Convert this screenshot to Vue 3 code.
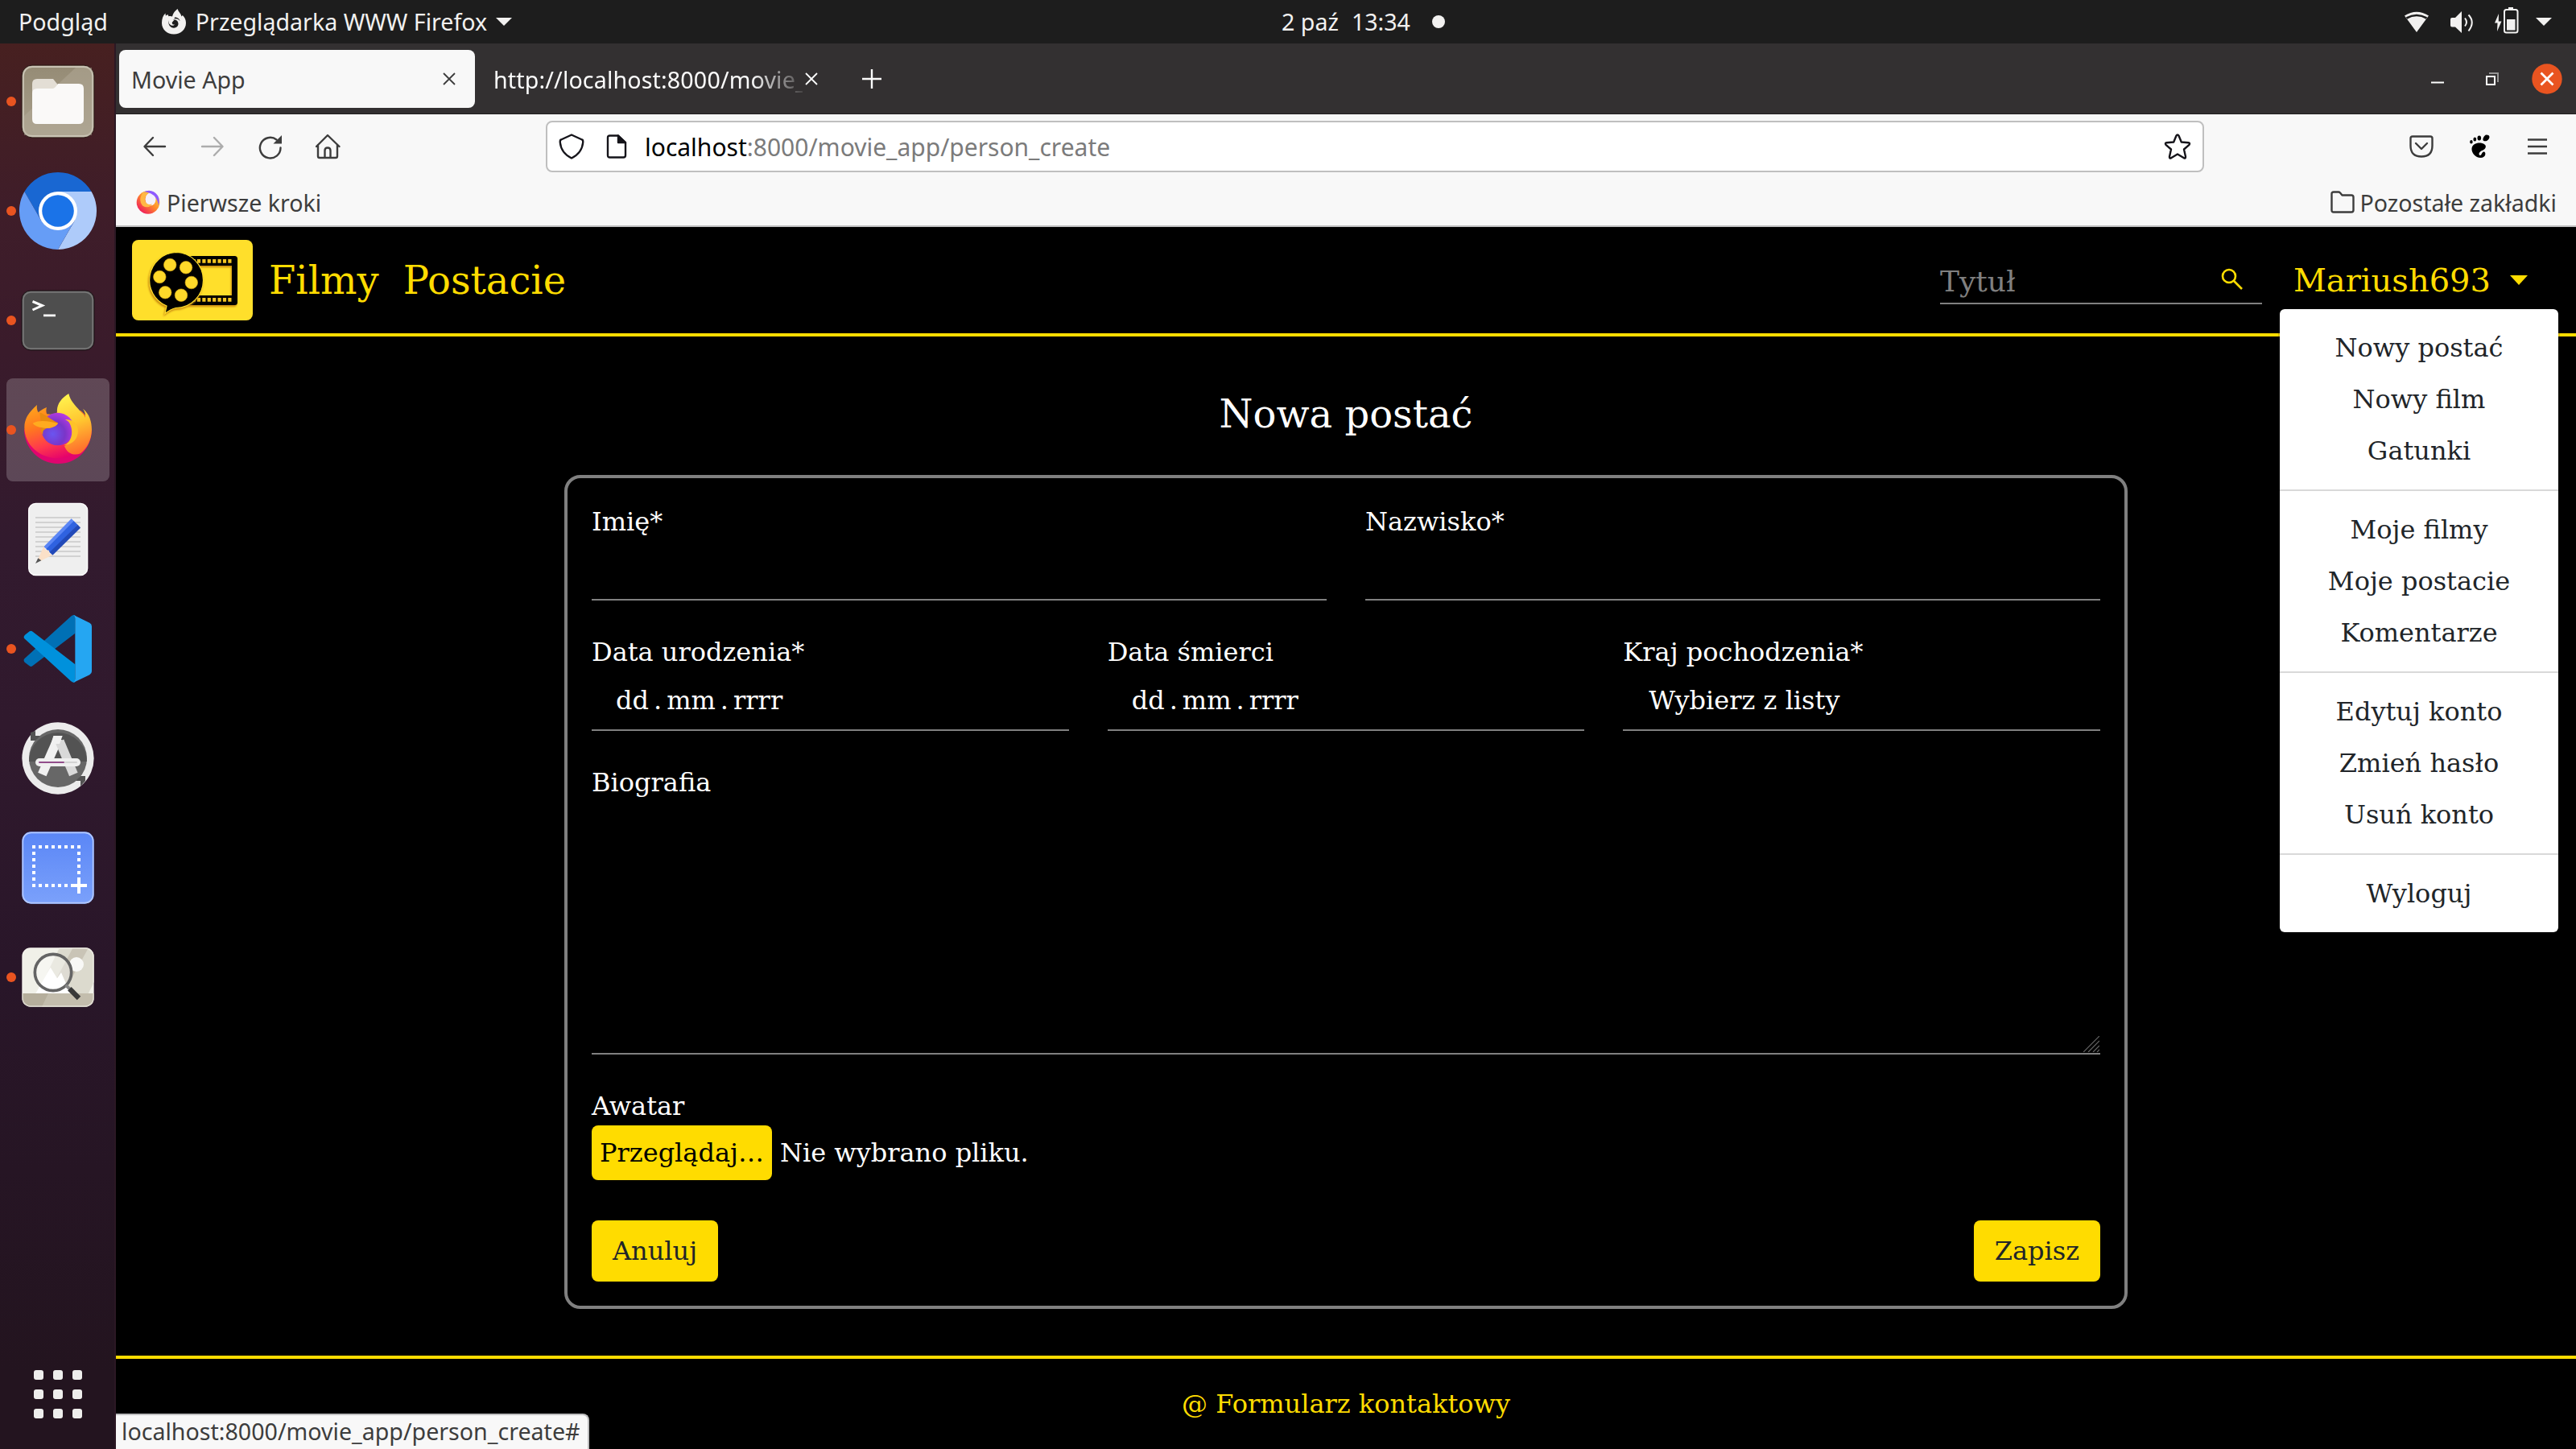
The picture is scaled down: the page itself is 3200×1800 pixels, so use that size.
<script setup>
const menuGroups = [
  ['Nowy postać', 'Nowy film', 'Gatunki'],
  ['Moje filmy', 'Moje postacie', 'Komentarze'],
  ['Edytuj konto', 'Zmień hasło', 'Usuń konto'],
  ['Wyloguj'],
]
const paperLines = [729, 747, 765, 783, 801, 819, 837, 855, 873]
const reelHoles = [[47.2, 31], [67, 34.3], [34.3, 46], [73.8, 53], [41.2, 65.3], [61, 68.7]]
</script>

<template>
  <div class="desktop">
    <div class="topbar">
      <div class="top-left">
        <span>Podgląd</span>
        <svg class="fx" viewBox="0 0 30 32" width="30" height="32"><path fill="#f2f1f0" d="M15 31.5C6.500 31.500 0 25.500 0 17.500C0 12 1.500 8.500 4.500 5.500L4.800 8.500L7.500 7L8.500 9.200C10.500 8.700 12 9 13 9.500C14 5 16.500 2.500 19.500 0C20.500 3.500 24 6 24.500 9.500L25.800 8C28.500 10.500 30 13.500 30 17.500C30 25.500 23.500 31.500 15 31.500Z" /><path fill="#1d1d1d" d="M8.500 14.500C11 15.500 13 14.500 14.500 13.500C17.500 13 20.500 15 20.500 18.500C20.500 21.500 18 23.700 15 23.700C10.500 23.700 7.500 19.500 8.500 14.500ZM16 10.500C19.500 10.500 22 12.500 22.500 15C20.500 12.500 18 12 15.500 12.500Z" /><path fill="#f2f1f0" d="M8 13.500L15.500 13.800L12.800 16.700C12.500 18.500 13.500 20 16 19.500C14 22 9 20.500 8.500 16.500Z" /></svg>
        <span>Przeglądarka WWW Firefox</span>
        <i class="tri tri-top"></i>
      </div>
      <div class="clock">
        <span>2 paź</span><span class="time">13:34</span><i class="rec"></i>
      </div>
      <div class="tray">
        <svg viewBox="0 0 30 26" width="30" height="26"><path fill="#f2f1f0" d="M0 5.500Q15-4 30 5.500L15 26Z" /><path fill="none" stroke="#1d1d1d" stroke-width="2.600" d="M2.500 8.500Q15 1.500 27.500 8.500" /></svg>
        <svg class="vol" viewBox="0 0 29 27" width="29" height="27"><path fill="#f2f1f0" d="M0 10Q0 8 2 8H6L14 0V27L6 19.500H2Q0 19.500 0 17.500Z" /><path fill="none" stroke="#f2f1f0" stroke-width="2" d="M18 8.500Q22 13.500 18 18.500M22.500 4.500Q31 13.500 22.500 24.500" /></svg>
        <svg class="bat" viewBox="0 0 30 33" width="30" height="33"><path fill="#f2f1f0" d="M5 8L0 19.500H3.500L3 30L8.500 17.500H4.800Z" /><rect x="12" y="3" width="16.500" height="28.500" rx="2.500" fill="none" stroke="#f2f1f0" stroke-width="2" /><path fill="#f2f1f0" d="M17 0H23V3H17ZM15 15H25.500V28.500H15Z" /></svg>
        <i class="tri"></i>
      </div>
    </div>

    <div class="workspace">
      <aside class="dock">
        <div class="slot run">
          <svg viewBox="0 0 128 128"><defs><linearGradient id="fg" x1="0" y1="0" x2="0" y2="1"><stop offset="0" stop-color="#958b75" /><stop offset="1" stop-color="#a9a08c" /></linearGradient></defs><rect x="19" y="19" width="90" height="90" rx="13" fill="url(#fg)" stroke="#2a1616" /><rect x="21" y="21" width="86" height="86" rx="11" fill="none" stroke="#c9c3b4" stroke-width="1.800" /><path fill="#b5ad9b" opacity=".45" d="M86 22H106V106H22V82Z" /><path fill="#e3ded5" d="M32 42Q32 36 38 36H58L66 46V56H32Z" /><path fill="#faf9f8" d="M32 54Q32 48 38 48H58Q61 47 64 42H90Q96 42 96 48V86Q96 92 90 92H38Q32 92 32 86Z" /></svg>
        </div>
        <div class="slot run">
          <svg viewBox="0 0 128 128"><path fill="#1967d2" d="M22.400 40A48 48 0 0 1 105.600 40H64L43.200 76Z" /><path fill="#aecbfa" d="M105.600 40A48 48 0 0 1 64 112L84.800 76L64 40Z" /><path fill="#669df6" d="M64 112A48 48 0 0 1 22.400 40L43.200 76H84.800Z" /><circle cx="64" cy="64" r="24" fill="#fff" /><circle cx="64" cy="64" r="19.800" fill="#1a73e8" /></svg>
        </div>
        <div class="slot run">
          <svg viewBox="0 0 128 128"><rect x="19" y="27" width="90" height="74" rx="11" fill="#4e4e4e" stroke="#1b1014" /><rect x="20.800" y="28.800" width="86.400" height="70.400" rx="9.500" fill="none" stroke="#777" stroke-width="1.800" /><path fill="none" stroke="#fff" stroke-width="3" d="M32.500 40.500L44.500 45.500L32.500 51" /><path fill="#fff" d="M46 56.500H61V59.200H46Z" /></svg>
        </div>
        <div class="slot run active">
          <svg viewBox="24 210 384 384">
            <defs>
              <linearGradient id="f1" x1=".2" y1="0" x2=".6" y2="1"><stop offset="0" stop-color="#ffa41c" /><stop offset=".35" stop-color="#ff7a1e" /><stop offset=".7" stop-color="#ff3a4c" /><stop offset="1" stop-color="#e5006c" /></linearGradient>
              <linearGradient id="f2" x1=".3" y1="0" x2=".5" y2="1"><stop offset="0" stop-color="#fff44f" /><stop offset=".5" stop-color="#ffc52f" /><stop offset="1" stop-color="#ff6b2d" /></linearGradient>
              <radialGradient id="f3" cx=".35" cy=".65" r=".75"><stop offset="0" stop-color="#6a55f0" /><stop offset=".5" stop-color="#7a35c8" /><stop offset="1" stop-color="#c43be8" /></radialGradient>
            </defs>
            <path fill="#e0056f" d="M90 400C90 470 145 528 216 528C290 528 342 470 342 398Z" />
            <path fill="url(#f1)" d="M91 392C92 355 110 335 138 309C136 322 139 331 143 337C152 328 163 323 174 318C171 328 172 338 175 343C190 345 202 346 214 336L300 330C328 350 336 380 334 412C325 468 275 508 216 508C145 508 90 455 91 392Z" />
            <path fill="url(#f2)" d="M213 338C210 308 228 284 256 267C262 296 285 315 303 337C315 347 316 352 317 357C320 345 316 333 309 323C332 341 342 370 342 402C341 440 325 470 300 490C275 500 250 490 240 462C262 455 274 432 268 400Z" />
            <circle cx="215" cy="399" r="61" fill="url(#f3)" />
            <path fill="#e88b10" d="M148 337C170 345 190 365 216 376C216 384 198 395 174 396C160 402 158 410 161 421C148 405 152 398 154 392Z" />
            <path fill="#ffab1f" d="M122 377C150 362 190 372 216 378C208 390 190 396 174 396C160 392 135 395 122 377Z" />
            <path fill="#ffc229" d="M243 363C280 362 295 390 290 415C285 445 262 458 236 460C268 450 278 405 256 372Z" />
          </svg>
        </div>
        <div class="slot">
          <svg viewBox="24 618 384 384"><rect x="107" y="676" width="219" height="268" rx="26" fill="#efefef" stroke="#fff" stroke-width="4" /><path v-for="y in paperLines" :key="y" :d="`M132 ${y}H300`" stroke="#d2d2d2" stroke-width="6" /><path fill="#5b86f5" d="M266 733L278 745L176 848L163 838Z" /><path fill="#2f62e0" d="M275 742L290 756L187 860L172 846Z" /><path fill="#2149b8" d="M290 755L300 767L196 869L185 858Z" /><path fill="#fbe0c8" d="M163 836L170 850L183 851L184 864L197 868L150 891L142 882Z" /><path fill="#555" d="M142 880L154 889L132 900Z" /></svg>
        </div>
        <div class="slot run">
          <svg viewBox="24 1026 384 384"><path fill="#0070b5" d="M91 1255Q86 1261 92 1268L110 1282Q116 1286 122 1281L280 1160V1093Q272 1090 264 1097Z" /><path fill="#0091dc" d="M91 1180Q86 1173 93 1166L110 1153Q116 1149 123 1155L280 1276V1342Q272 1346 264 1338Z" /><path fill="#25a6f2" d="M273 1091L334 1121Q342 1125 342 1134V1302Q342 1310 334 1315L273 1344Q280 1340 280 1330V1105Q280 1095 273 1091Z" /></svg>
        </div>
        <div class="slot">
          <svg viewBox="24 54 384 384"><circle cx="216" cy="246" r="134" fill="#ececec" /><circle cx="216" cy="246" r="108" fill="#676767" /><path fill="#535353" d="M108 258A108 108 0 0 1 324 258ZM114 150L132 144V162H150L132 180H114ZM318 312V330L300 350V330H282L300 312Z" /><g fill="none" stroke-width="34"><path stroke="#f1f1f1" d="M157 306L216 172" /><path stroke="#d9d9d9" d="M274 306L222 182" /></g><path fill="#f1f1f1" d="M199 162H233L222 192H190Z" /><rect x="132" y="246" width="168" height="30" rx="15" fill="#efefef" /><path stroke="#924d8b" stroke-width="6" stroke-linecap="round" d="M147 261H237" /><path stroke="#d3d3d3" stroke-width="6" stroke-linecap="round" d="M243 261H285" /></svg>
        </div>
        <div class="slot">
          <svg viewBox="24 462 384 384"><defs><linearGradient id="sg" x1="0" y1="0" x2="0" y2="1"><stop offset="0" stop-color="#5a86f6" /><stop offset="1" stop-color="#7ba1fb" /></linearGradient></defs><rect x="82" y="520" width="268" height="268" rx="34" fill="url(#sg)" /><rect x="85" y="523" width="262" height="262" rx="31" fill="none" stroke="#b3c8fd" stroke-width="5" /><path fill="none" stroke="#fff" stroke-width="12" stroke-dasharray="12 12" d="M120 576H300M126 594V726M144 720H264M294 594V690" /><path stroke="#fff" stroke-width="12" d="M264 720H324M294 690V750" /></svg>
        </div>
        <div class="slot run">
          <svg viewBox="24 870 384 384"><defs><clipPath id="vc"><rect x="82" y="952" width="268" height="220" rx="32" /></clipPath></defs><g clip-path="url(#vc)"><path fill="#f0f0e8" d="M82 952H350V1172H82Z" /><path fill="#dcdace" d="M222 952H360V1062L320 1140H130Z" /><path fill="#c9c4b6" d="M272 952H330L235 1124H180Z" /><path fill="#b5ae9c" d="M82 1122H350V1172H82Z" /><path fill="#c3bdad" d="M180 1122H350V1172H156Z" /></g><rect x="84" y="954" width="264" height="216" rx="30" fill="none" stroke="#f8f7f2" stroke-opacity=".6" stroke-width="4" /><circle cx="285" cy="1014" r="27" fill="#f8f8f6" /><path fill="#fff" d="M133 1122L188 1025L213 1066L228 1044L262 1122Z" /><circle cx="198" cy="1044" r="68" fill="#fff" fill-opacity=".4" stroke="#646464" stroke-width="11" /><path stroke="#858585" stroke-width="12" d="M245 1091L260 1106" /><path stroke="#383838" stroke-width="19" d="M259 1105L294 1140" /></svg>
        </div>
        <div class="apps"><i v-for="n in 9" :key="n"></i></div>
      </aside>

      <main class="browser">
        <div class="tabs">
          <div class="tab on"><span>Movie App</span><svg class="x" viewBox="0 0 16 16"><path d="M1 1L15 15M15 1L1 15" /></svg></div>
          <div class="tab"><span class="fade">http://localhost:8000/movie_</span><svg class="x" viewBox="0 0 16 16"><path d="M1 1L15 15M15 1L1 15" /></svg></div>
          <svg class="plus" viewBox="0 0 26 26"><path d="M13 1V25M1 13H25" /></svg>
          <div class="win">
            <svg viewBox="0 0 16 16"><path fill="#fff" d="M0 11.500H16V13.500H0Z" /></svg>
            <svg viewBox="0 0 16 16"><path fill="none" stroke="#969595" stroke-width="2" d="M4 1H15V12" /><path fill="none" stroke="#fff" stroke-width="2" d="M1 5H11V15H1Z" /></svg>
            <svg class="close" viewBox="0 0 38 38"><circle cx="19" cy="19" r="18.700" fill="#e95420" /><path stroke="#fff" stroke-width="2.800" d="M11.500 11.500L26.500 26.500M26.500 11.500L11.500 26.500" /></svg>
          </div>
        </div>

        <div class="toolbar">
          <div class="navbar">
            <div class="navicons">
              <svg viewBox="0 0 32 32"><path d="M29 16H4M14 5L3.500 16L14 27" /></svg>
              <svg class="off" viewBox="0 0 32 32"><path d="M3 16H28M18 5L28.500 16L18 27" /></svg>
              <svg viewBox="0 0 32 32"><path d="M28.500 17.500A12.800 12.800 0 1 1 23.500 7.500" /><path fill="#3d3d3d" stroke="none" d="M30 2V12.500H19.500Z" /></svg>
              <svg viewBox="0 0 32 32"><path d="M1 16L15 2L29.500 16M3 14V28Q3 30 5 30H25Q27 30 27 28V14M11.500 30V21Q11.500 17.500 15 17.500Q18.500 17.500 18.500 21V30" /></svg>
            </div>
            <div class="urlbar">
              <svg class="shield" viewBox="0 0 32 32"><path d="M16 1.500L29 7.500Q30.500 8 30.200 11Q29 24 16 30.500Q3 24 1.800 11Q1.500 8 3 7.500Z" /></svg>
              <svg class="page" viewBox="0 0 26 30"><path d="M4.500 1.500H15L24 10V26Q24 28.500 21.500 28.500H4.500Q2 28.500 2 26V4Q2 1.500 4.500 1.500Z" /><path fill="#15141a" d="M15 1.500L24 10H15Z" /></svg>
              <span class="url"><b>localhost</b>:8000/movie_app/person_create</span>
              <svg class="star" viewBox="0 0 34 34"><path d="M17 2.500Q18 2.500 18.500 3.500L21.800 11.500L30.500 12.300Q33 12.800 31.500 14.800L25 20.500L27 29.500Q27.200 32.200 25 31.300L17 26.500L9 31.300Q6.800 32.200 7 29.500L9 20.500L2.500 14.800Q1 12.800 3.500 12.300L12.200 11.500L15.500 3.500Q16 2.500 17 2.500Z" /></svg>
            </div>
            <div class="acts">
              <svg class="pocket" viewBox="0 0 30 28"><path d="M4 1.500H26Q28.500 1.500 28.500 4V13Q28.500 26.500 15 26.500Q1.500 26.500 1.500 13V4Q1.500 1.500 4 1.500Z" /><path d="M8 10L15 17L22 10" /></svg>
              <svg class="foot" viewBox="0 0 26 30"><path fill="#000" d="M20.500 .5C25 .3 25.500 4 23 6.500C21 9 17 8.800 16.500 7C16 5 18 1 20.500 .5ZM18.500 12.500C21 14 20 18 16.500 19.500C11 21.500 10.500 25.500 13 26C15 26 14.500 22 17.500 21.500C20.500 21.500 20.500 29 13.500 29C7 29 2 23 2.500 17.500C3 11 13 8.500 18.500 12.500Z" /><ellipse cx="11.800" cy="4.500" rx="2.300" ry="3" fill="#000" /><ellipse cx="6.300" cy="6" rx="1.900" ry="2.600" fill="#000" /><ellipse cx="1.900" cy="9.200" rx="1.700" ry="2.200" fill="#000" /></svg>
              <svg class="ham" viewBox="0 0 24 20"><path d="M0 1.500H24M0 10H24M0 18.500H24" /></svg>
            </div>
          </div>
          <div class="bookmarks">
            <svg class="ff" viewBox="0 0 30 30"><defs><linearGradient id="b1" x1=".9" y1=".1" x2=".2" y2=".9"><stop offset="0" stop-color="#ffde3a" /><stop offset=".5" stop-color="#ff8a2a" /><stop offset="1" stop-color="#f0205a" /></linearGradient></defs><circle cx="15" cy="15.500" r="14.300" fill="url(#b1)" /><ellipse cx="18" cy="11.500" rx="6.500" ry="8" fill="#f4f0fb" /><path fill="#8f5bff" d="M9 2.500Q20-2.500 27 7Q30 12 28 19Q26 8 18.500 4.500Q13 2 9 2.500Z" /><path fill="#ffb845" d="M9 2.500Q14 2 15.500 4Q9 9 11.500 14.500Q14 19 20 17.500Q15 24 8 19.500Q2 12 9 2.500Z" /></svg>
            <span>Pierwsze kroki</span>
            <span class="others"><svg viewBox="0 0 30 28"><path d="M1.500 4Q1.500 1.500 4 1.500H10Q11 1.500 12 2.500L14.500 5.500H26Q28.500 5.500 28.500 8V24Q28.500 26.500 26 26.500H4Q1.500 26.500 1.500 24Z" /></svg><span>Pozostałe zakładki</span></span>
          </div>
        </div>

        <div class="site">
          <header>
            <svg class="logo" viewBox="0 0 150 100">
              <rect width="150" height="100" rx="8" fill="#ffdf2b" />
              <path class="mark" fill="#000" fill-rule="evenodd" d="M70 20H127.500Q131 20 131 23.500V77.500Q131 81 127.500 81H70ZM76 32V69H124V32Z" />
              <path stroke="#f3c522" stroke-width="4.600" stroke-dasharray="4.200 2.200" d="M74.500 26.400H125M74.500 74.400H125" />
              <path class="mark" fill="#000" stroke="#ffdf2b" stroke-width="1.200" d="M54.500 15.500A34 34.500 0 0 1 54.500 84.500Q48 86 41 91.500L43 82A34 34.500 0 0 1 54.500 15.500Z" />
              <circle v-for="(h, i) in reelHoles" :key="i" :cx="h[0]" :cy="h[1]" r="7.800" fill="#ffd92a" stroke="#d9a514" stroke-width=".6" />
            </svg>
            <nav><a>Filmy</a><a>Postacie</a></nav>
            <div class="search"><span>Tytuł</span><svg viewBox="0 0 28 28"><circle cx="10" cy="10" r="8" /><path d="M16 16L26 26" /></svg></div>
            <div class="user"><span>Mariush693</span><i class="tri"></i></div>
            <div class="menu">
              <ul v-for="(g, i) in menuGroups" :key="i"><li v-for="item in g" :key="item">{{ item }}</li></ul>
            </div>
          </header>

          <section class="content">
            <h1>Nowa postać</h1>
            <form class="card">
              <div class="row">
                <div class="field"><label>Imię*</label><div class="input"></div></div>
                <div class="field"><label>Nazwisko*</label><div class="input"></div></div>
              </div>
              <div class="row">
                <div class="field"><label>Data urodzenia*</label><div class="input date"><span>dd</span><span>.</span><span>mm</span><span>.</span><span>rrrr</span></div></div>
                <div class="field"><label>Data śmierci</label><div class="input date"><span>dd</span><span>.</span><span>mm</span><span>.</span><span>rrrr</span></div></div>
                <div class="field"><label>Kraj pochodzenia*</label><div class="input select">Wybierz z listy</div></div>
              </div>
              <div class="field"><label>Biografia</label><div class="input area"><svg viewBox="0 0 20 20"><path d="M0 20L20 0M6 20L20 6M12 20L20 12M17 20L20 17" /></svg></div></div>
              <div class="field"><label>Awatar</label><div class="file"><span class="browse">Przeglądaj…</span><span>Nie wybrano pliku.</span></div></div>
              <div class="buttons"><span class="btn">Anuluj</span><span class="btn">Zapisz</span></div>
            </form>
          </section>

          <footer><a>@ Formularz kontaktowy</a></footer>
          <div class="status">localhost:8000/movie_app/person_create#</div>
        </div>
      </main>
    </div>
  </div>
</template>

<style>
body { background: #000; overflow: hidden; }
</style>

<style scoped>
* { box-sizing: border-box; }
svg { display: block; flex: none; }
.desktop { width: 3200px; height: 1800px; display: flex; flex-direction: column; font-family: "Noto Sans", sans-serif; font-size: 28.6px; overflow: hidden; white-space: nowrap; }
.topbar { height: 54px; background: #1d1d1d; color: #f2f1f0; display: grid; grid-template-columns: 1fr auto 1fr; align-items: center; line-height: 54px; }
.top-left { display: flex; align-items: center; padding-left: 23px; }
.top-left .fx { margin: 0 12px 0 67px; }
.tri { width: 0; height: 0; border: 10px solid transparent; border-top: 10px solid #f2f1f0; border-bottom: 0; }
.tri-top { margin-left: 11px; }
.clock { display: flex; align-items: center; padding-left: 187px; }
.time { margin-left: 16px; }
.rec { width: 16px; height: 16px; border-radius: 50%; background: #f2f1f0; margin-left: 27px; }
.tray { display: flex; align-items: center; justify-content: flex-end; padding-right: 30px; }
.vol { margin-left: 27px; }
.bat { margin: -4px 21px 0 26px; }

.workspace { flex: 1; display: flex; min-height: 0; }
.dock { width: 144px; padding-top: 4px; border-right: 2px solid #2b1824; background: linear-gradient(#472020 0, #3f1d29 200px, #3a1b2b 380px, #321a2e 620px, #30192d 850px, #291629 1150px, #23141f 1650px); display: flex; flex-direction: column; }
.slot { height: 136px; width: 144px; display: grid; align-items: center; flex: none; }
.slot svg { grid-area: 1 / 1; width: 128px; height: 128px; margin-left: 8px; border-radius: 8px; }
.slot.active svg { background: rgba(255, 255, 255, .2); }
.run::before { content: ""; grid-area: 1 / 1; width: 12px; height: 12px; border-radius: 50%; background: #e95420; margin-left: 8px; z-index: 1; }
.apps { margin: auto 0 38px 42px; display: grid; grid-template-columns: repeat(3, 12px); gap: 12px; }
.apps i { height: 12px; border-radius: 3px; background: #eeeeec; }

.browser { flex: 1; display: flex; flex-direction: column; min-width: 0; }
.tabs { height: 88px; background: #333031; border-bottom: 1px solid #1f1d1e; display: flex; align-items: center; padding: 0 17px 0 4px; }
.tab { height: 72px; margin-top: 1px; display: flex; align-items: center; color: #fbfbfb; padding: 0 0 0 23px; }
.tab.on { width: 442px; background: #f8f8f8; color: #3d3d3d; border-radius: 8px; padding: 0 24px 0 15px; justify-content: space-between; }
.fade { width: 384px; letter-spacing: .15px; margin-right: 3px; -webkit-mask-image: linear-gradient(90deg, #000 320px, transparent 392px); mask-image: linear-gradient(90deg, #000 320px, transparent 392px); }
.x { width: 16px; height: 16px; stroke: currentColor; stroke-width: 1.8; }
.plus { width: 26px; height: 26px; stroke: #fbfbfb; stroke-width: 2.4; margin-left: 54px; }
.win { margin-left: auto; display: flex; align-items: center; }
.win svg { width: 16px; height: 16px; margin-right: 52px; }
.win svg + svg { margin-right: 41px; }
.win .close { width: 38px; height: 38px; margin-right: 0; }

.toolbar { height: 140px; background: #f8f8f8; border-bottom: 2px solid #bfbfc0; color: #3d3d3d; }
.toolbar svg { fill: none; stroke: #3d3d3d; stroke-width: 2.4; stroke-linejoin: round; stroke-linecap: round; }
.navbar { height: 80px; display: flex; align-items: center; }
.navicons { display: flex; gap: 40px; width: 534px; padding-left: 32px; }
.navicons svg { width: 32px; height: 32px; }
.navicons .off { opacity: .4; }
.urlbar { width: 2060px; height: 64px; border: 2px solid #bfbfbf; border-radius: 8px; background: #fff; display: flex; align-items: center; padding: 0 14px; }
.urlbar svg { stroke: #15141a; }
.shield { width: 32px; height: 32px; }
.page { width: 26px; height: 30px; margin: 0 22px 0 27px; }
.url { color: #7b7b7b; font-size: 30px; }
.url b { font-weight: 400; color: #000; }
.star { width: 34px; height: 34px; margin-left: auto; }
.acts { display: flex; align-items: center; margin-left: 255px; }
.pocket { width: 30px; height: 28px; }
.foot { width: 26px; height: 30px; margin: 0 46px 0 45px; stroke: none !important; }
.ham { width: 24px; height: 20px; }
.bookmarks { height: 58px; display: flex; align-items: center; padding: 0 24px; }
.ff { width: 30px; height: 30px; margin: 0 8px 0 1px; stroke: none !important; }
.others { margin-left: auto; display: flex; align-items: center; }
.others svg { width: 30px; height: 28px; margin-right: 7px; }

.site { flex: 1; position: relative; background: #000; color: #fff; font: 32px/48px "DejaVu Serif", serif; display: flex; flex-direction: column; }
header { height: 136px; border-bottom: 4px solid #ffdc00; display: flex; align-items: center; padding: 0 60px 0 20px; color: #ffdc00; }
.logo { width: 150px; height: 100px; }
.mark { filter: drop-shadow(-1px 2px 1px #c98a10); }
nav { display: flex; gap: 30px; margin-left: 20px; font-size: 48px; }
.search { width: 400px; height: 52px; margin: 8px 39px 0 auto; border-bottom: 2px solid #808080; font-size: 36px; color: #808080; display: flex; justify-content: space-between; padding-right: 23px; }
.search svg { width: 28px; height: 28px; margin-top: 7px; fill: none; stroke: #ffdc00; stroke-width: 2.6; }
.user { display: flex; align-items: center; gap: 24px; font-size: 40px; }
.user .tri { border-width: 12px 11px 0; border-top-color: #ffdc00; }
.menu { position: absolute; z-index: 2; top: 100px; right: 20px; width: 350px; padding: 16px 0; background: #fff; background-clip: padding-box; border: 2px solid rgba(0, 0, 0, .15); border-radius: 8px; color: #212529; text-align: center; }
ul { list-style: none; margin: 0; padding: 0; }
ul + ul { border-top: 2px solid #d9d9d9; margin-top: 16px; padding-top: 16px; }
li { padding: 8px 0; }
.content { flex: 1; display: flex; flex-direction: column; align-items: center; }
h1 { font-size: 48px; line-height: 58px; font-weight: 400; margin: 67px 0 47px; }
.card { width: 1942px; height: 1036px; border: 4px solid #808080; border-radius: 20px; padding: 30px; display: flex; flex-direction: column; gap: 40px; }
.row { display: flex; gap: 48px; }
.field { flex: 1; display: flex; flex-direction: column; }
.card > .field { flex: none; }
.input { height: 74px; border-bottom: 2px solid #808080; padding: 12px 30px; display: flex; }
.date span:nth-child(even) { margin: 0 6px; }
.select { padding-left: 32px; }
.area { height: 314px; padding: 0; justify-content: flex-end; align-items: flex-end; }
.area svg { width: 20px; height: 20px; margin: 0 1px 1px 0; stroke: #666; stroke-width: 1.2; }
.file { display: flex; align-items: center; gap: 10px; height: 68px; }
.browse { background: #ffdc00; color: #000; border-radius: 8px; padding: 10px; }
.buttons { display: flex; justify-content: space-between; margin-top: 10px; }
.btn { background: #ffdc00; color: #212529; border-radius: 8px; padding: 14px 26px; }
footer { height: 116px; border-top: 4px solid #ffdc00; color: #ffdc00; text-align: center; padding-top: 32px; }
.status { position: absolute; left: 0; bottom: 0; height: 44px; padding: 0 9px 0 7px; border: 2px solid #bfbfc0; border-width: 2px 2px 0 0; border-top-right-radius: 8px; background: #f8f8f8; color: #3d3d3d; font: 28.6px/40px "Noto Sans", sans-serif; }
</style>
